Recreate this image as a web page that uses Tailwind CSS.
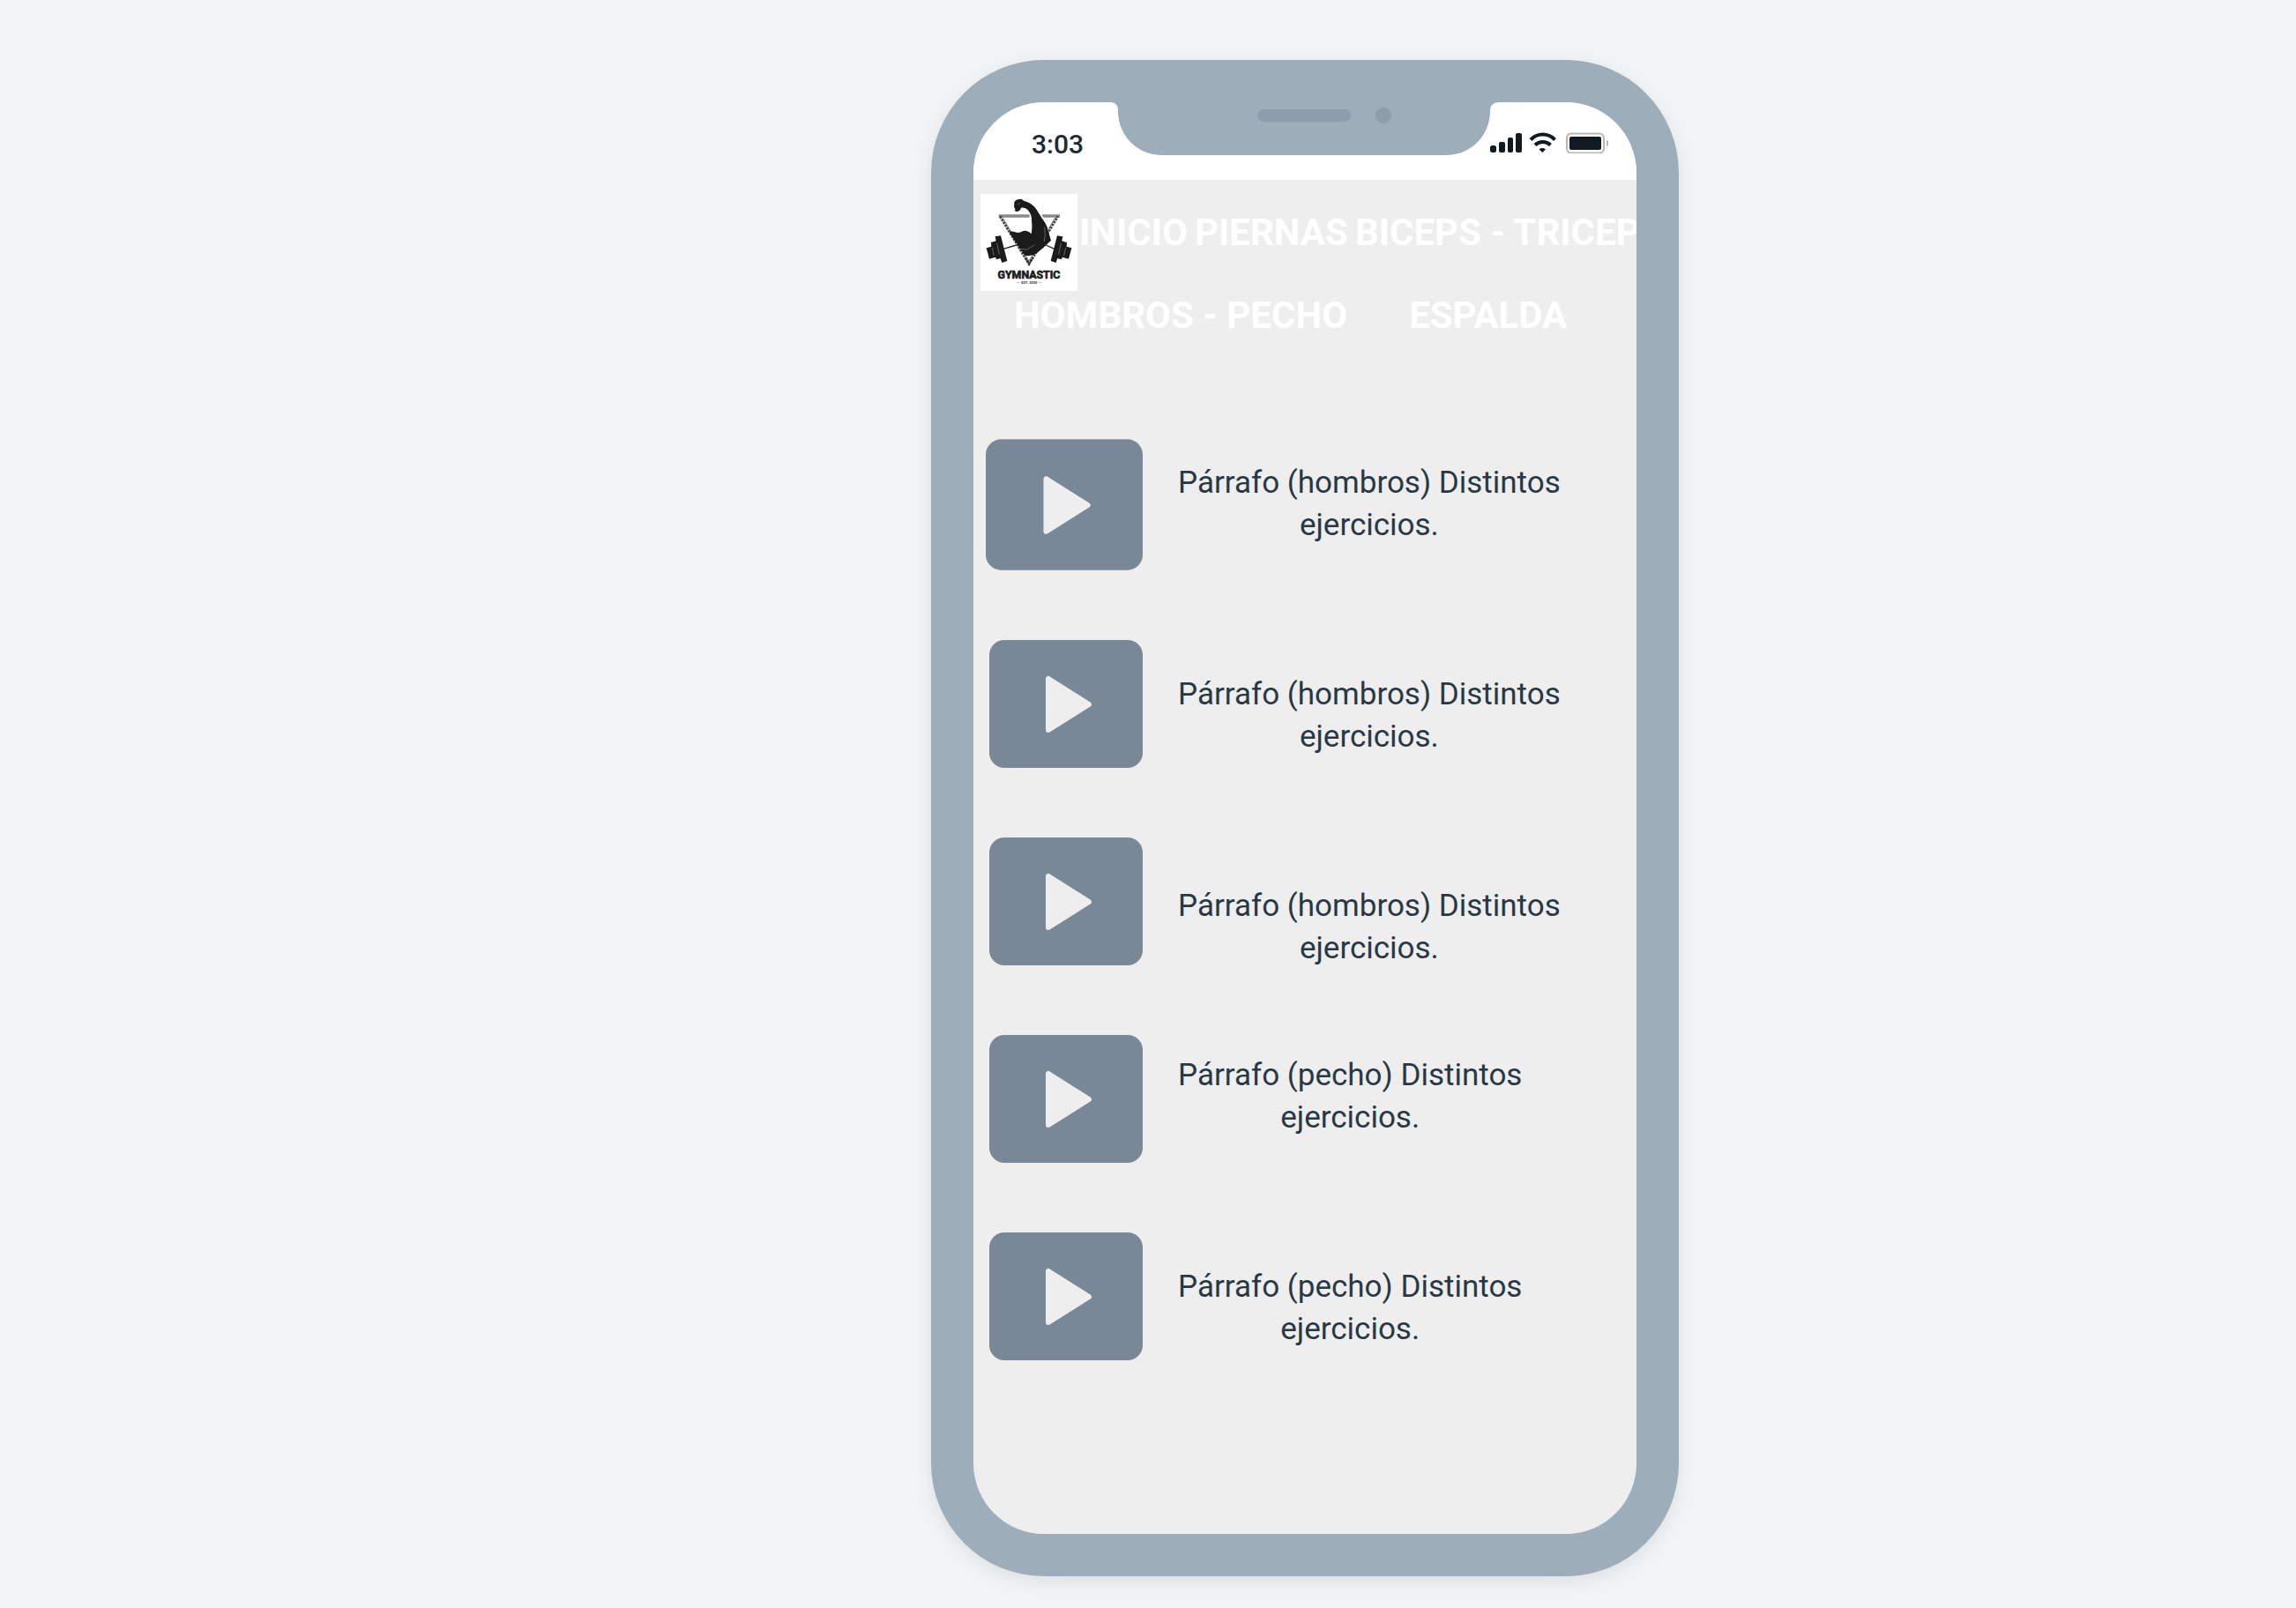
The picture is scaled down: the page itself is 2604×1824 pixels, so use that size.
<!DOCTYPE html>
<html lang="es">
<head>
<meta charset="utf-8">
<meta name="viewport" content="width=device-width, initial-scale=1">
<title>Gymnastic</title>
<script src="https://cdn.jsdelivr.net/npm/@tailwindcss/browser@4"></script>
</head>
<body class="flex min-h-screen justify-center bg-[#f0f4f7] pt-17 pb-9 font-['Roboto',sans-serif] text-[#293845] lg:pl-89">

<svg class="hidden" aria-hidden="true">
  <symbol id="play" viewBox="0 0 174 145">
    <path fill="#788896" d="M17 0H157a17 17 0 0 1 17 17V128a17 17 0 0 1-17 17H17A17 17 0 0 1 0 128V17A17 17 0 0 1 17 0Z"/>
    <path fill="#eee" stroke="#eee" stroke-width="6" stroke-linejoin="round" d="M67 44V102L113 73Z"/>
  </symbol>
</svg>

<div class="w-full max-w-212 rounded-[128px] bg-[#9eadba] p-12 shadow-[0_6px_20px_rgba(0,0,0,0.08)]">
  <div class="relative flex min-h-406 flex-col overflow-hidden rounded-[80px] bg-[#eee]">

    <!-- Status bar -->
    <header class="flex h-22 items-center justify-between bg-white pr-8 pl-16.5">
      <time class="pt-1.5 text-[30px] font-medium text-[#1e2a33]">3:03</time>
      <svg class="mt-1 h-6 w-[136px]" viewBox="0 0 136 24" aria-label="Señal, wifi y batería">
        <g fill="#111a21">
          <rect x="2" y="15" width="7" height="8" rx="2.5"/>
          <rect x="12" y="11" width="7" height="12" rx="2"/>
          <rect x="22" y="6" width="6" height="17" rx="2"/>
          <rect x="31" y="1" width="7" height="22" rx="2"/>
          <path d="M57.500 19.500a5.500 5.500 0 0 1 7.500 0L61.250 23Z"/>
          <rect x="92" y="5" width="36" height="15" rx="2"/>
        </g>
        <g fill="none" stroke="#111a21" stroke-width="4">
          <path d="M48 8.500a19 19 0 0 1 27.500 0"/>
          <path d="M53 14.500a12.500 12.500 0 0 1 17.500 0"/>
        </g>
        <rect x="89" y="1.500" width="42" height="22" rx="5" fill="none" stroke="#b9b5b7" stroke-width="2"/>
        <path d="M134 9v7q3-1 3-3.500T134 9Z" fill="#b9b5b7"/>
      </svg>
    </header>

    <!-- Notch -->
    <div class="absolute inset-x-0 top-0 flex justify-center" aria-hidden="true">
      <svg class="h-15 w-[440px]" viewBox="0 0 440 60">
        <path fill="#9eadba" d="M0 0H440Q430 0 430 10C430 38 408 60 380 60H58C30 60 8 38 8 10Q8 0 0 0Z"/>
        <rect x="166" y="8" width="106" height="14" rx="7" fill="#8e9dac"/>
        <circle cx="309" cy="15" r="9" fill="#8e9dac"/>
      </svg>
    </div>

    <!-- Logo and sections -->
    <nav class="px-2 pt-4 text-[42px] leading-12 font-bold whitespace-nowrap text-white">
      <div class="flex">
        <svg class="size-[110px] shrink-0" viewBox="0 0 330 330" role="img" aria-label="Gymnastic">
          <rect width="330" height="330" fill="#fff"/>
          <g fill="none">
            <path d="M62 75H270" stroke="#8a8a8a" stroke-width="10"/>
            <path d="M67 76L165 238L263 76" stroke="#444" stroke-width="9" stroke-dasharray="8 3"/>
            <path d="M76 82L165 228L254 82" stroke="#777" stroke-width="3"/>
          </g>
          <path d="M78 187L122 174M222 174L252 187" stroke="#222" stroke-width="4"/>
          <path fill="#fff" d="M166 60H204L232 122L226 135H170Z"/>
          <g fill="#1b1b1b">
            <path d="M115 37Q112 24 127 19Q139 14 147 23Q176 30 190 52L210 84Q226 104 230 124L240 158Q214 184 191 202Q167 216 149 207L98 131Q106 124 118 130Q130 134 140 128Q158 120 173 136Q177 112 174 92Q176 70 160 53Q150 45 138 47Q136 59 122 60Q114 58 119 52Q112 46 115 37Z"/>
            <path d="M50 145L69 142L91 228L73 234L68 219L55 223L51 215L30 221L20 184L37 179L36 165L53 160Z"/>
            <path d="M280 145L261 142L239 228L257 234L262 219L275 223L279 215L300 221L310 184L293 179L294 165L277 160Z"/>
          </g>
          <path d="M218 112Q222 138 217 163M138 187L156 190L184 174M126 37L134 31M40 183L46 210M56 167L64 206M290 183L284 210M274 167L266 206" fill="none" stroke="#888" stroke-width="2"/>
          <path d="M153 217L165 238L178 217" fill="none" stroke="#333" stroke-width="4"/>
          <text x="165" y="287" text-anchor="middle" font-family="Roboto, sans-serif" font-weight="700" font-size="37" fill="#1b1b1b" stroke="#1b1b1b" stroke-width="2">GYMNASTIC</text>
          <text x="166" y="305" text-anchor="middle" font-family="Roboto, sans-serif" font-weight="700" font-size="12" fill="#333">EST. 2020</text>
          <path d="M123 301H134M198 301H209" stroke="#999" stroke-width="2"/>
        </svg>
        <div class="flex flex-1 gap-2 pt-5 pl-0.5">
          <a href="#inicio">INICIO</a>
          <a href="#piernas">PIERNAS</a>
          <a href="#biceps-triceps">BICEPS - TRICEPS</a>
        </div>
      </div>
      <div class="flex gap-17.5 pt-1 pl-9.5">
        <a href="#hombros-pecho">HOMBROS - PECHO</a>
        <a href="#espalda">ESPALDA</a>
      </div>
    </nav>

    <!-- Exercise videos with their descriptions -->
    <main class="flex gap-10 px-2 pt-29">
      <div class="flex w-46 shrink-0 flex-col items-end gap-[79px]">
        <button type="button" aria-label="Reproducir video 1"><svg class="block h-[149px] w-[178px]"><use href="#play"/></svg></button>
        <button type="button" aria-label="Reproducir video 2"><svg class="block h-[145px] w-[174px]"><use href="#play"/></svg></button>
        <button type="button" aria-label="Reproducir video 3"><svg class="block h-[145px] w-[174px]"><use href="#play"/></svg></button>
        <button type="button" aria-label="Reproducir video 4"><svg class="block h-[145px] w-[174px]"><use href="#play"/></svg></button>
        <button type="button" aria-label="Reproducir video 5"><svg class="block h-[145px] w-[174px]"><use href="#play"/></svg></button>
      </div>
      <div class="flex flex-col items-start gap-36 pt-6.5 text-center text-[35px] leading-12">
        <p>Párrafo (hombros) Distintos<br>ejercicios.</p>
        <p>Párrafo (hombros) Distintos<br>ejercicios.</p>
        <div class="flex flex-col items-start gap-24">
          <p>Párrafo (hombros) Distintos<br>ejercicios.</p>
          <p>Párrafo (pecho) Distintos<br>ejercicios.</p>
        </div>
        <p>Párrafo (pecho) Distintos<br>ejercicios.</p>
      </div>
    </main>
  </div>
</div>
</body>
</html>
